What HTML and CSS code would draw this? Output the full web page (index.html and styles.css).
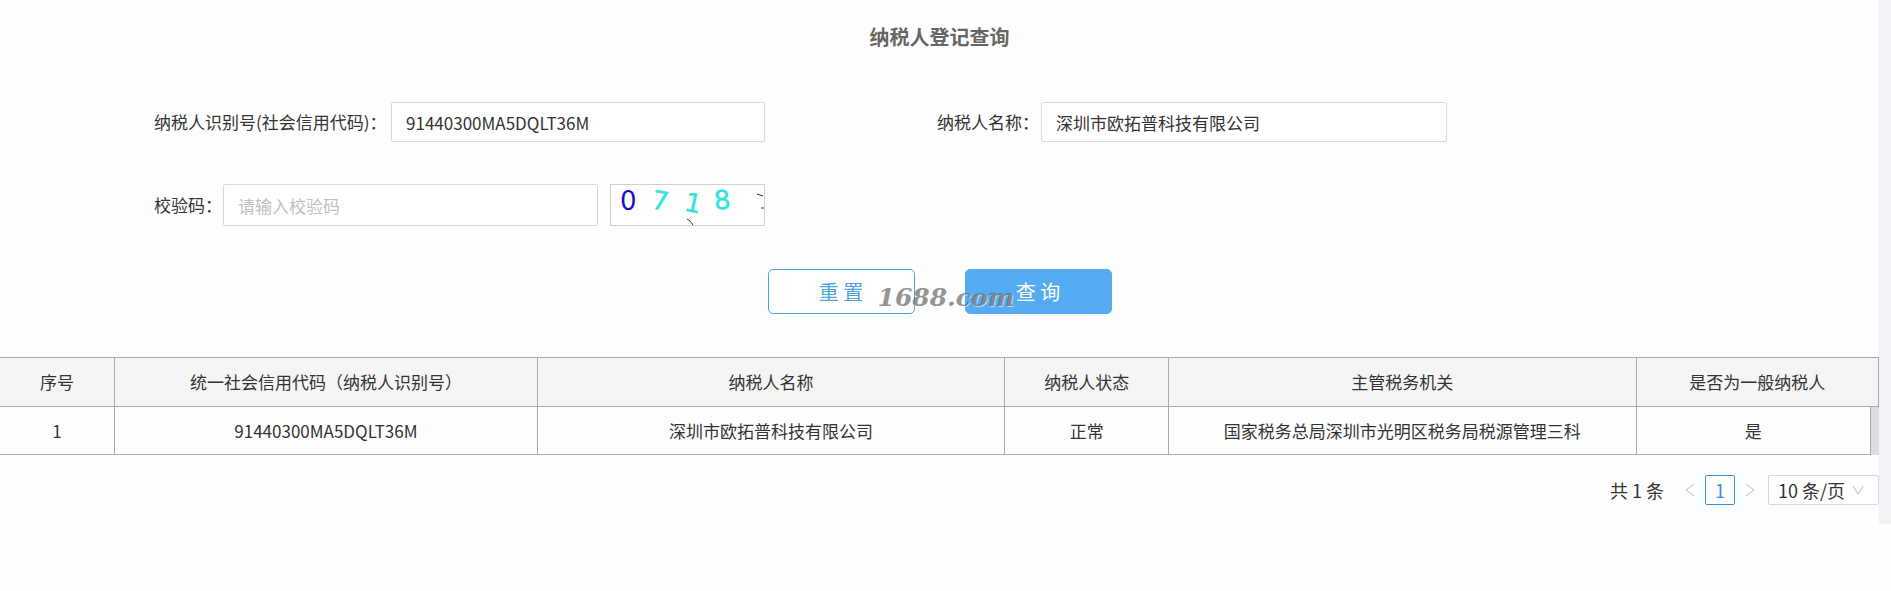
FILE: index.html
```html
<!DOCTYPE html>
<html lang="zh-CN">
<head>
  <meta charset="UTF-8" />
  <meta name="viewport" content="width=device-width, initial-scale=1.0" />
  <title>纳税人登记查询</title>
  <link rel="stylesheet" href="styles.css">
</head>
<body>
  <div class="page">
    <main class="content">
      <h1 class="title">纳税人登记查询</h1>

      <form class="query-form">
        <div class="fields">
          <div class="field">
            <label for="taxpayer-id" class="label-long">纳税人识别号(社会信用代码)：</label>
            <input type="text" id="taxpayer-id" value="91440300MA5DQLT36M">
          </div>
          <div class="field">
            <label for="taxpayer-name" class="label-medium">纳税人名称：</label>
            <input type="text" id="taxpayer-name" value="深圳市欧拓普科技有限公司">
          </div>
          <div class="field field-captcha">
            <label for="captcha" class="label-short">校验码：</label>
            <input type="text" id="captcha" placeholder="请输入校验码">
            <svg class="captcha" viewBox="0 0 153 40" role="img" aria-label="校验码">
              <text class="digit-dark" x="9" y="25">0</text>
              <text class="digit-light" x="41" y="25" transform="rotate(10 50 16)">7</text>
              <text class="digit-light" x="74" y="27" transform="rotate(12 82 18)">1</text>
              <text class="digit-light" x="103" y="24" transform="rotate(-5 112 15)">8</text>
              <path class="speck" d="M76 34l3 2 3 4M146 9l3 1 3 1M150 23h3" />
            </svg>
          </div>
        </div>

        <div class="actions">
          <button type="reset" class="btn">重 置</button>
          <button type="submit" class="btn btn-primary">查 询</button>
          <span class="watermark">1688.com</span>
        </div>
      </form>

      <table class="result">
        <colgroup>
          <col class="col-no">
          <col class="col-code">
          <col class="col-name">
          <col class="col-status">
          <col class="col-office">
          <col>
          <col class="col-scroll">
        </colgroup>
        <thead>
          <tr>
            <th>序号</th>
            <th>统一社会信用代码（纳税人识别号）</th>
            <th>纳税人名称</th>
            <th>纳税人状态</th>
            <th>主管税务机关</th>
            <th colspan="2">是否为一般纳税人</th>
          </tr>
        </thead>
        <tbody>
          <tr>
            <td>1</td>
            <td>91440300MA5DQLT36M</td>
            <td>深圳市欧拓普科技有限公司</td>
            <td>正常</td>
            <td>国家税务总局深圳市光明区税务局税源管理三科</td>
            <td>是</td>
            <td class="scroll"></td>
          </tr>
        </tbody>
      </table>

      <nav class="pagination">
        <span class="total">共 1 条</span>
        <button type="button" class="arrow" aria-label="上一页">
          <svg viewBox="0 0 10 14"><path d="M9 1L1 7l8 6" /></svg>
        </button>
        <button type="button" class="page-no">1</button>
        <button type="button" class="arrow" aria-label="下一页">
          <svg viewBox="0 0 10 14"><path d="M1 1l8 6-8 6" /></svg>
        </button>
        <div class="page-size">
          <select aria-label="每页条数">
            <option>10 条/页</option>
          </select>
          <svg viewBox="0 0 12 10"><path d="M1 1l5 8 5-8" /></svg>
        </div>
      </nav>
    </main>
  </div>
</body>
</html>
```

FILE: styles.css
```css
* {
  box-sizing: border-box;
}

body {
  margin: 0;
  background: #fefefe;
  color: #333;
  font-family: "Noto Sans CJK SC", sans-serif;
  font-size: 17px;
  line-height: 24px;
}

input,
button,
select {
  font: inherit;
  color: inherit;
}

.page {
  padding-right: 12px;
  background: #f1f1f6;
}

.content {
  padding: 22px 0 19px;
  background: #fefefe;
}

.title {
  margin: 0 0 50px;
  font-size: 20px;
  line-height: 30px;
  text-align: center;
  color: #666;
}

/* 查询表单 */
.fields {
  display: grid;
  grid-template-columns: 611fr 510fr;
  gap: 42px 172px;
  padding: 0 23% 0 8.2%;
}

.field {
  display: flex;
  align-items: center;
}

.label-long {
  width: 237px;
}

.label-medium {
  width: 104px;
}

.label-short {
  width: 69px;
}

.field label {
  white-space: nowrap;
}

.field input {
  flex: 1;
  min-width: 0;
  height: 40px;
  padding: 0 14px;
  border: 1px solid #d9d9d9;
  border-radius: 2px;
  background: #fff;
}

.field-captcha input {
  height: 42px;
}

.field input::placeholder {
  color: #bfbfbf;
}

.captcha {
  width: 155px;
  height: 42px;
  margin-left: 12px;
  border: 1px solid #d0d0d0;
  background: #fff;
  font-family: "DejaVu Sans", sans-serif;
  font-size: 26px;
}

.digit-dark {
  fill: #1a10c4;
}

.digit-light {
  fill: #35e2de;
  stroke: #35e2de;
  stroke-width: 0.5;
}

.speck {
  fill: none;
  stroke: #333;
}

.actions {
  position: relative;
  display: flex;
  justify-content: center;
  gap: 50px;
  margin: 43px 0;
}

.btn {
  width: 147px;
  height: 45px;
  padding: 0;
  border: 1px solid #4fa3dc;
  border-radius: 5px;
  background: #fff;
  color: #4fa3dc;
  font-size: 20px;
}

.btn-primary {
  border-color: #55abf2;
  background: #55abf2;
  color: #fff;
}

.watermark {
  position: absolute;
  top: 17px;
  left: 50%;
  margin-left: -62px;
  color: rgba(100, 100, 100, 0.7);
  font-family: "DejaVu Serif", serif;
  font-size: 25px;
  font-style: italic;
  font-weight: bold;
  text-shadow: 1px 1px 1px rgba(255, 255, 255, 0.6);
  pointer-events: none;
}

/* 查询结果 */
.result {
  width: 100%;
  table-layout: fixed;
  border-collapse: collapse;
  text-align: center;
}

.result th,
.result td {
  height: 48px;
  padding: 0;
  border: 1px solid #aaa;
  font-weight: normal;
}

.result th {
  height: 49px;
  background: #f5f5f5;
}

.result th:first-child,
.result td:first-child {
  border-left: 0;
}

.col-no {
  width: 6.1%;
}

.col-code {
  width: 22.5%;
}

.col-name,
.col-office {
  width: 24.9%;
}

.col-status {
  width: 8.7%;
}

.col-scroll {
  width: 8px;
}

.result .scroll {
  border-right: 0;
  border-bottom: 0;
  background: #ddd;
}

/* 分页 */
.pagination {
  display: flex;
  align-items: center;
  justify-content: flex-end;
  margin-top: 20px;
  font-size: 18px;
}

.total {
  margin-right: 11px;
}

.arrow {
  display: flex;
  align-items: center;
  justify-content: center;
  width: 30px;
  height: 30px;
  padding: 0;
  border: 0;
  background: none;
}

.arrow svg {
  width: 10px;
  height: 14px;
}

.pagination path {
  fill: none;
  stroke: #bbb;
}

.page-no {
  width: 30px;
  height: 30px;
  padding: 0;
  border: 1px solid #2f8fdc;
  border-radius: 2px;
  background: #fff;
  color: #3b8cf0;
}

.page-size {
  position: relative;
  margin-left: 3px;
}

.page-size select {
  display: block;
  width: 111px;
  height: 30px;
  padding: 0 9px;
  border: 1px solid #d9d9d9;
  border-radius: 2px;
  background: #fff;
  appearance: none;
}

.page-size svg {
  position: absolute;
  top: 10px;
  right: 15px;
  width: 12px;
  height: 10px;
  pointer-events: none;
}
```
